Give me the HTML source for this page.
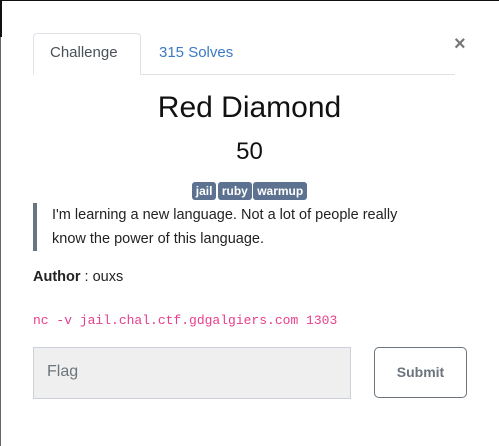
<!DOCTYPE html>
<html><head><style>
body{margin:0;width:499px;height:446px;background:#fff;position:relative;overflow:hidden;font-family:"Liberation Sans",sans-serif;color:#212529}
.a{position:absolute}
.b{background:#5c7290;border-radius:3px;padding:2px 4px;display:inline-block;margin:0 -1px}
</style></head><body>
<div class="a" style="left:0;top:0;width:499px;height:1px;background:#111"></div>
<div class="a" style="left:0;top:0;width:1px;height:446px;background:#666"></div>
<div class="a" style="left:0;top:0;width:2px;height:37px;background:#111"></div>
<div class="a" style="left:33px;top:74px;width:422px;height:1px;background:#dee2e6"></div>
<div class="a" style="left:33px;top:33px;width:108px;border:1px solid #dee2e6;border-bottom:1px solid #fff;border-radius:4px 4px 0 0;box-sizing:border-box;background:#fff;height:42px"></div>
<div class="a" style="left:50px;top:44px;font-size:15px;color:#495057">Challenge</div>
<div class="a" style="left:159px;top:44px;font-size:15px;color:#3b7bc4">315 Solves</div>
<div class="a" style="left:454px;top:33px;font-size:20px;font-weight:bold;color:#777">×</div>
<div class="a" style="left:0;width:499px;top:91px;text-align:center;font-size:30px;color:#111">Red Diamond</div>
<div class="a" style="left:0;width:499px;top:138px;text-align:center;font-size:24px;color:#111">50</div>
<div class="a" style="left:0;width:499px;top:182px;text-align:center;font-size:12px;font-weight:bold;color:#fff">
<span class="b">jail</span>
<span class="b">ruby</span>
<span class="b">warmup</span></div>
<div class="a" style="left:33px;top:203px;width:4px;height:48px;background:#6c757d"></div>
<div class="a" style="left:52px;top:203px;width:375px;font-size:14.5px;line-height:24px;color:#222">I'm learning a new language. Not a lot of people really know the power of this language.</div>
<div class="a" style="left:33px;top:269px;font-size:14.5px;color:#222"><b>Author</b> : ouxs</div>
<div class="a" style="left:33px;top:313px;font-size:13px;font-family:'Liberation Mono',monospace;color:#e83e8c">nc -v jail.chal.ctf.gdgalgiers.com 1303</div>
<div class="a" style="left:33px;top:347px;width:318px;height:52px;background:#efefef;border:1px solid #ccd1d9;box-sizing:border-box"></div>
<div class="a" style="left:47px;top:363px;font-size:16px;color:#6c757d">Flag</div>
<div class="a" style="left:374px;top:347px;width:93px;height:51px;border:1px solid #6c757d;border-radius:5px;box-sizing:border-box;text-align:center;line-height:49px;font-size:14px;font-weight:bold;color:#6c757d">Submit</div>
</body></html>
